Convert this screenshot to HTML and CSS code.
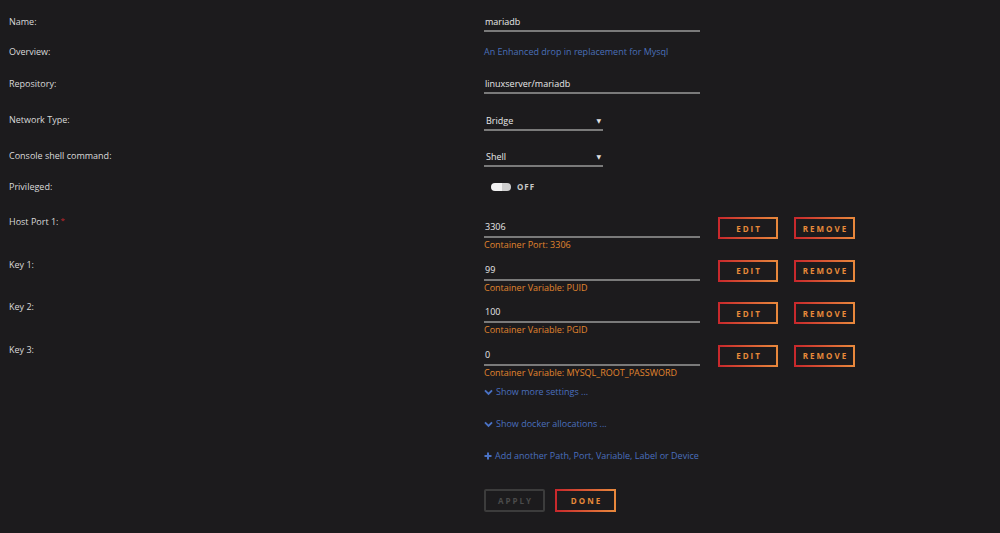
FILE: index.html
```html
<!DOCTYPE html>
<html>
<head>
<meta charset="utf-8">
<link rel="stylesheet" href="styles.css">
</head>
<body>
<form class="form">
  <div class="row r-name">
    <div class="label">Name:</div>
    <div class="field"><div class="input wide">mariadb</div></div>
  </div>
  <div class="row r-over">
    <div class="label">Overview:</div>
    <div class="field"><div class="overview">An Enhanced drop in replacement for Mysql</div></div>
  </div>
  <div class="row r-repo">
    <div class="label">Repository:</div>
    <div class="field"><div class="input wide">linuxserver/mariadb</div></div>
  </div>
  <div class="row r-net">
    <div class="label">Network Type:</div>
    <div class="field"><div class="input select">Bridge<span class="caret">&#9660;</span></div></div>
  </div>
  <div class="row r-shell">
    <div class="label">Console shell command:</div>
    <div class="field"><div class="input select">Shell<span class="caret">&#9660;</span></div></div>
  </div>
  <div class="row r-priv">
    <div class="label">Privileged:</div>
    <div class="field"><div class="switch"><span class="knob"></span><span class="off">OFF</span></div></div>
  </div>
  <div class="row r-cfg">
    <div class="label">Host Port 1:<span class="req">*</span></div>
    <div class="field cfg">
      <div class="cfgval"><div class="input wide val">3306</div><div class="desc">Container Port: 3306</div></div>
      <button type="button" class="btn">EDIT</button>
      <button type="button" class="btn wide-btn">REMOVE</button>
    </div>
  </div>
  <div class="row r-cfg">
    <div class="label">Key 1:</div>
    <div class="field cfg">
      <div class="cfgval"><div class="input wide val">99</div><div class="desc">Container Variable: PUID</div></div>
      <button type="button" class="btn">EDIT</button>
      <button type="button" class="btn wide-btn">REMOVE</button>
    </div>
  </div>
  <div class="row r-cfg">
    <div class="label">Key 2:</div>
    <div class="field cfg">
      <div class="cfgval"><div class="input wide val">100</div><div class="desc">Container Variable: PGID</div></div>
      <button type="button" class="btn">EDIT</button>
      <button type="button" class="btn wide-btn">REMOVE</button>
    </div>
  </div>
  <div class="row r-cfg">
    <div class="label">Key 3:</div>
    <div class="field cfg">
      <div class="cfgval"><div class="input wide val">0</div><div class="desc">Container Variable: MYSQL_ROOT_PASSWORD</div></div>
      <button type="button" class="btn">EDIT</button>
      <button type="button" class="btn wide-btn">REMOVE</button>
    </div>
  </div>
  <div class="row r-link">
    <div class="label"></div>
    <div class="field"><a class="link"><svg class="chev" viewBox="0 0 10 8" width="9" height="7"><path d="M1 1.5 L5 5.5 L9 1.5" fill="none" stroke="currentColor" stroke-width="2.2"/></svg>Show more settings ...</a></div>
  </div>
  <div class="row r-link">
    <div class="label"></div>
    <div class="field"><a class="link"><svg class="chev" viewBox="0 0 10 8" width="9" height="7"><path d="M1 1.5 L5 5.5 L9 1.5" fill="none" stroke="currentColor" stroke-width="2.2"/></svg>Show docker allocations ...</a></div>
  </div>
  <div class="row r-add">
    <div class="label"></div>
    <div class="field"><a class="link"><svg class="plus" viewBox="0 0 8 8" width="8" height="8"><path d="M4 0.5 V7.5 M0.5 4 H7.5" fill="none" stroke="currentColor" stroke-width="2"/></svg>Add another Path, Port, Variable, Label or Device</a></div>
  </div>
  <div class="row r-actions">
    <div class="label"></div>
    <div class="field actions">
      <button type="button" class="btn disabled">APPLY</button>
      <button type="button" class="btn">DONE</button>
    </div>
  </div>
</form>
</body>
</html>
```

FILE: styles.css
```css
html, body {
  margin: 0;
  padding: 0;
  background: #1c1b1d;
  height: 100%;
}
body {
  font-family: "Open Sans", "DejaVu Sans", sans-serif;
  font-size: 9px;
  color: #d6d6d6;
  overflow: hidden;
}
.form {
  padding: 15px 0 0 9px;
  display: flex;
  flex-direction: column;
}
.row {
  display: grid;
  grid-template-columns: 475px 1fr;
  line-height: 14px;
}
.label {
  color: #dadada;
  font-weight: 500;
}
.req {
  color: #c0282d;
  margin-left: 2px;
  position: relative;
  top: -2px;
  font-size: 8px;
}
.r-name { height: 30px; }
.r-over { height: 32px; }
.r-repo { height: 36px; }
.r-net { height: 36px; }
.r-shell { height: 31px; }
.r-priv { height: 35px; }
.r-cfg { height: 42.5px; }
.r-link { height: 32px; }
.r-add { height: 40px; }
.input {
  color: #e8e8e8;
  border-bottom: 2px solid #7a7a7a;
  height: 15px;
  box-sizing: content-box;
  padding-left: 1px;
}
.wide { width: 215px; }
.select {
  width: 117px;
  position: relative;
  padding-left: 2px;
  margin-top: 1px;
}
.caret {
  position: absolute;
  right: 2px;
  top: 0;
  font-size: 6px;
  color: #e0e0e0;
}
.overview {
  color: #4a6fb8;
}
.switch {
  display: flex;
  align-items: center;
  gap: 6px;
  padding-left: 7px;
  height: 14px;
}
.knob {
  width: 20px;
  height: 8px;
  border-radius: 4px;
  background: linear-gradient(90deg, #f2f2f2 0 55%, #cfcfcf 55% 100%);
}
.off {
  color: #c8c8c8;
  font-weight: 700;
  font-size: 8px;
  letter-spacing: 1px;
}
.cfg {
  display: flex;
  align-items: flex-start;
}
.cfgval {
  width: 216px;
  margin-top: 5px;
}
.val { height: 16px; }
.desc {
  color: #e0852e;
  margin-top: 0;
}
.btn {
  font-family: "Open Sans", "DejaVu Sans", sans-serif;
  background: #1c1b1d;
  color: #e88a3a;
  font-weight: 700;
  font-size: 8px;
  letter-spacing: 2px;
  border: 2px solid;
  border-image: linear-gradient(90deg, #c8282c, #e8883c) 1;
  width: 60px;
  height: 22px;
  padding: 0 0 0 2px;
  margin: 2px 0 0 18px;
  text-align: center;
  cursor: pointer;
}
.wide-btn { margin-left: 16px; width: 61px; }
.link {
  color: #4a6fbd;
  display: inline-flex;
  align-items: center;
  gap: 3px;
}
.chev { color: #4a72c4; }
.plus { color: #4a72c4; }
.actions {
  display: flex;
  gap: 10px;
}
.actions .btn {
  margin: 0;
  width: 61px;
  height: 23px;
}
.actions .btn.disabled {
  color: #4b4b4b;
  border-image: none;
  border: 2px solid #3c3c3c;
  border-radius: 2px;
}
```
